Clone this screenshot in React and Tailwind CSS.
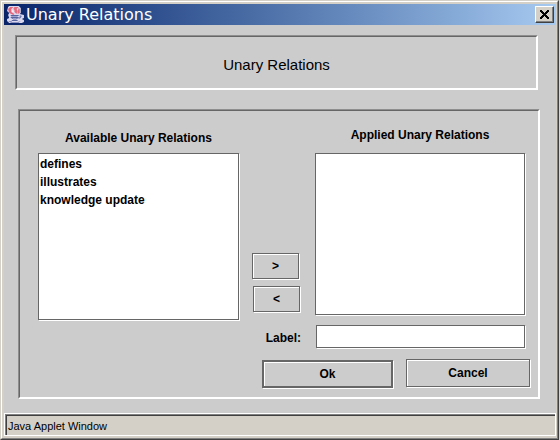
import React from "react";

const bevel =
  "border border-[#666] shadow-[1px_1px_0_#fff,inset_1px_1px_0_#fff]";

function Group({ className, children }) {
  return (
    <section className="border border-t-[#8e8e8e] border-l-[#8e8e8e] border-r-white border-b-white">
      <div
        className={`border border-t-[#666] border-l-[#666] border-r-white border-b-white ${className}`}
      >
        {children}
      </div>
    </section>
  );
}

function JavaIcon() {
  return (
    <svg className="h-[18px] w-[19px] shrink-0" viewBox="0 0 18 18" preserveAspectRatio="none" aria-hidden="true">
      <path d="M3 0h9l2 2v5l-1 1 4 1v3l-2 1 2 1v2l-2 1H3l-2-2v-2l2-1-1-3 1-2-2-2 1-4z" fill="#dcd9ee" />
      <path d="M4 1h3L5 3v3l3 2-1 1-4-2-1-4z" fill="#e8657a" />
      <path d="M8 1h4l-2 2 1 2-1 3-2-2V4L7 3zM12 2l1 1v4l-2 1v-2z" fill="#e66b7e" />
      <path d="M6 4l1 1v1H6z" fill="#fff" />
      <path d="M4 9h8v1H5zM4 11h8v1l-2 1H6zM5 14h6v1H6z" fill="#58659f" />
      <path d="M13 9l2 1-1 2-2 1v-1l1-1z" fill="#6f7cb0" />
      <path d="M2 15h3l1 1h5l3-1-2 2H5z" fill="#8a91c0" />
      <path d="M5 10h6v1H5zM6 12h4v2H7z" fill="#9c9fcb" />
    </svg>
  );
}

function TitleBar() {
  return (
    <header className="flex h-[21px] items-center bg-linear-to-r from-[#0a246a] to-[#a6caf0] pl-[2px] pr-[2px]">
      <JavaIcon />
      <h1 className="flex-1 pl-px font-['DejaVu_Sans',sans-serif] text-[16px] leading-[21px] text-white">
        Unary Relations
      </h1>
      <button
        type="button"
        aria-label="Close"
        className="flex h-[17px] w-[19px] items-center justify-center border border-t-white border-l-white border-r-[#404040] border-b-[#404040] bg-[#d4d0c8] shadow-[inset_-1px_-1px_0_#808080]"
      >
        <svg className="h-[9px] w-[9px]" viewBox="0 0 9 9" shapeRendering="crispEdges">
          <path
            d="M0 0h2v1h1v1h1v1h1V2h1V1h1V0h2v2H8v1H7v1H6v1h1v1h1v1h1v2H7V8H6V7H5V6H4v1H3v1H2v1H0V7h1V6h1V5h1V4H2V3H1V2H0z"
            fill="#000"
          />
        </svg>
      </button>
    </header>
  );
}

function RelationList({ id, title, items, headingClass, listClass }) {
  return (
    <>
      <label htmlFor={id} className={`block text-center leading-4 ${headingClass}`}>
        {title}
      </label>
      <select
        id={id}
        multiple
        className={`block w-full appearance-none overflow-hidden rounded-none border border-[#666] bg-white px-px pt-[3px] shadow-[1px_1px_0_#fff] outline-none ${listClass}`}
      >
        {items.map((item) => (
          <option key={item} className="h-[18px] p-0 font-bold leading-[18px]">
            {item}
          </option>
        ))}
      </select>
    </>
  );
}

export default function App() {
  return (
    <div className="flex min-h-screen flex-col border border-t-[#d4d0c8] border-l-[#d4d0c8] border-r-[#404040] border-b-[#404040] bg-[#d4d0c8] font-['Liberation_Sans',Arial,sans-serif] text-[12px] text-black">
      <div className="flex flex-1 flex-col border border-t-white border-l-white border-r-[#808080] border-b-[#808080] pt-[2px] pr-px pb-[2px] pl-[2px]">
        <TitleBar />
        <main className="flex flex-1 flex-col gap-[19px] bg-[#ccc] pt-[10px] pr-[16px] pb-[14px] pl-[11px]">
          <div className="mr-[2px]">
            <Group className="flex h-[53px] items-center justify-center">
              <h2 className="pt-[4px] text-[15px] leading-5">Unary Relations</h2>
            </Group>
          </div>
          <div className="ml-[3px]">
            <Group className="flex pt-[16px] pr-[8px] pb-[9px] pl-[18px] font-bold">
              <div className="min-w-0 flex-[201]">
                <RelationList
                  id="available"
                  title="Available Unary Relations"
                  items={["defines", "illustrates", "knowledge update"]}
                  headingClass="mt-[3px] mb-[7px]"
                  listClass="h-[167px]"
                />
              </div>
              <div className="ml-[13px] flex min-w-0 flex-[278] flex-col">
                <div className="mr-[5px] grid grid-cols-[49px_1fr] gap-x-[14px]">
                  <div className="flex flex-col gap-[7px] pt-[126px] pb-[3px]">
                    <button type="button" className={`h-[26px] w-[47px] leading-4 ${bevel}`}>
                      &gt;
                    </button>
                    <button type="button" className={`ml-px h-[26px] w-[47px] leading-4 ${bevel}`}>
                      &lt;
                    </button>
                  </div>
                  <div>
                    <RelationList
                      id="applied"
                      title="Applied Unary Relations"
                      items={[]}
                      headingClass="mb-[10px]"
                      listClass="h-[162px]"
                    />
                  </div>
                </div>
                <div className="mt-[10px] mr-[5px] grid grid-cols-[49px_1fr] items-center gap-x-[15px]">
                  <label htmlFor="relation-label" className="pt-[2px] text-right leading-4">
                    Label:
                  </label>
                  <input
                    id="relation-label"
                    type="text"
                    className="h-[23px] w-full min-w-0 border border-[#666] bg-white px-1 shadow-[1px_1px_0_#fff] outline-none"
                  />
                </div>
                <div className="mt-[11px] ml-[10px] flex items-start gap-[13px]">
                  <button
                    type="button"
                    className="mt-px h-[28px] flex-[127] border-2 border-[#666] leading-4 shadow-[1px_1px_0_#fff,inset_1px_1px_0_#fff]"
                  >
                    Ok
                  </button>
                  <button type="button" className={`h-[28px] flex-[122] leading-4 ${bevel}`}>
                    Cancel
                  </button>
                </div>
              </div>
            </Group>
          </div>
        </main>
        <footer className="border border-white">
          <div className="border border-r-0 border-b-0 border-[#808080]">
            <div className="border-t border-t-[#404040] border-l border-l-[#404040] pl-px pt-[2px] text-[11px] leading-[17px]">
              Java Applet Window
            </div>
          </div>
        </footer>
      </div>
    </div>
  );
}
